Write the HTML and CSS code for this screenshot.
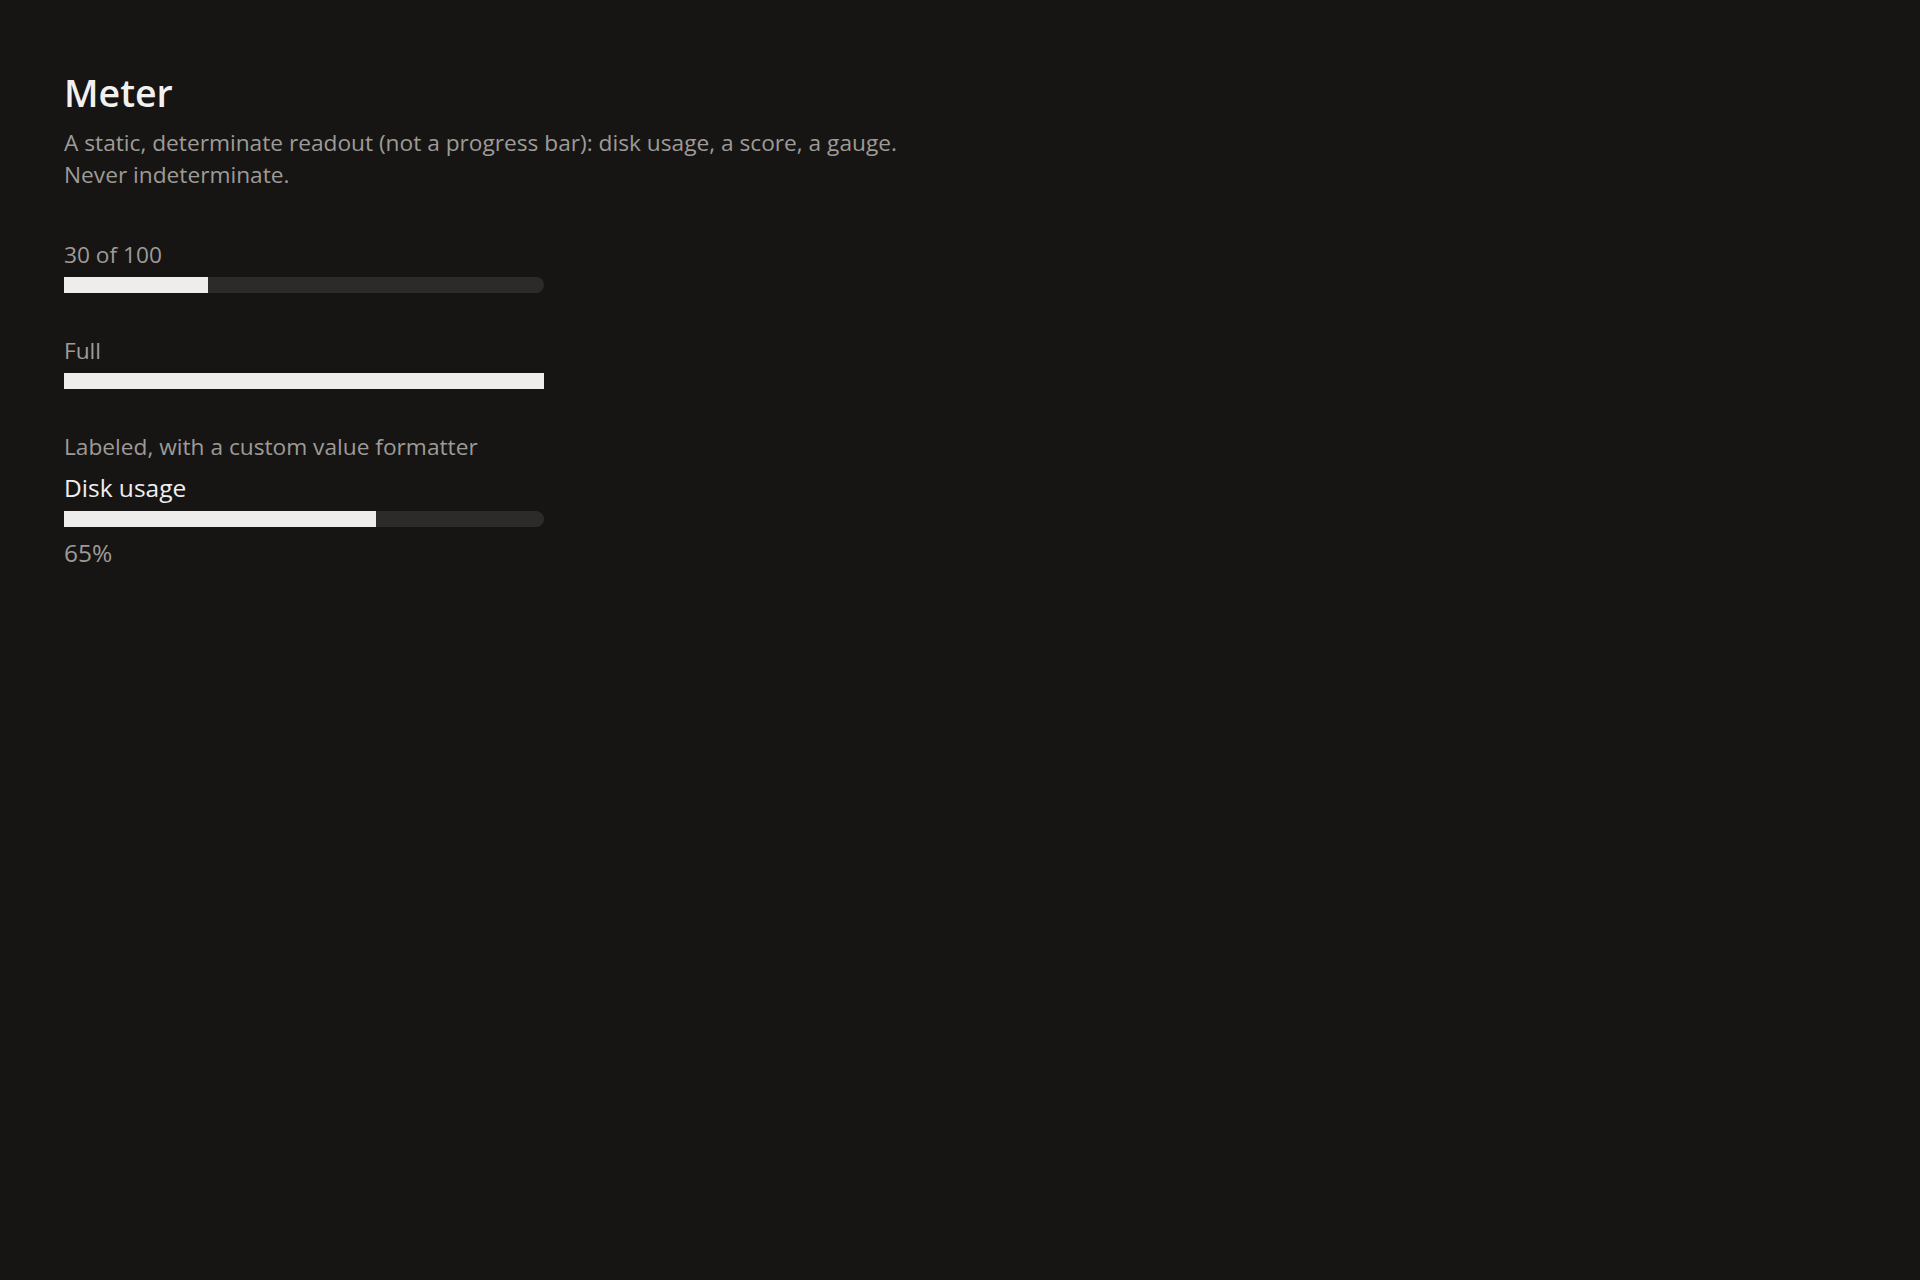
FILE: index.html
```html
<!DOCTYPE html>
<html lang="en">
<head>
  <meta charset="UTF-8">
  <meta name="viewport" content="width=device-width, initial-scale=1.0">
  <title>Meter</title>
  <link rel="stylesheet" href="styles.css">
</head>
<body>
  <main class="demo-page">
    <h1 class="demo-title">Meter</h1>
    <p class="demo-lede">A static, determinate readout (not a progress bar): disk usage, a score, a gauge. Never indeterminate.</p>

    <section class="demo-case">
      <p class="demo-caption">30 of 100</p>
      <div class="meter" role="meter" aria-valuemin="0" aria-valuemax="100" aria-valuenow="30">
        <div class="meter-track">
          <div class="meter-fill" style="width: 30%"></div>
        </div>
      </div>
    </section>

    <section class="demo-case">
      <p class="demo-caption">Full</p>
      <div class="meter" role="meter" aria-valuemin="0" aria-valuemax="100" aria-valuenow="100">
        <div class="meter-track">
          <div class="meter-fill" style="width: 100%"></div>
        </div>
      </div>
    </section>

    <section class="demo-case">
      <p class="demo-caption">Labeled, with a custom value formatter</p>
      <div class="meter meter-labeled" role="meter" aria-valuemin="0" aria-valuemax="100" aria-valuenow="65" aria-labelledby="disk-label">
        <span class="meter-label" id="disk-label">Disk usage</span>
        <div class="meter-track">
          <div class="meter-fill" style="width: 65%"></div>
        </div>
        <span class="meter-value">65%</span>
      </div>
    </section>
  </main>
</body>
</html>
```

FILE: styles.css
```css
html, body {
  margin: 0;
  padding: 0;
  background-color: #161514;
}
body {
  font-family: "Open Sans", "Noto Sans", sans-serif;
  color: #9e9b97;
  min-height: 100vh;
}
.demo-page {
  padding: 70px 64px;
  display: flex;
  flex-direction: column;
}
.demo-title {
  margin: 0;
  font-size: 37.5px;
  line-height: 46px;
  font-weight: 600;
  color: #f2f1ef;
}
.demo-lede {
  margin: 11px 0 0;
  max-width: 880px;
  font-size: 22.7px;
  line-height: 32px;
}
.demo-case {
  display: flex;
  flex-direction: column;
  gap: 7px;
  margin-top: 42px;
}
.demo-case:first-of-type {
  margin-top: 48px;
}
.demo-caption {
  margin: 0;
  font-size: 22.7px;
  line-height: 31px;
}
.meter {
  width: 480px;
  display: flex;
  flex-direction: column;
  gap: 8px;
}
.meter-labeled {
  margin-top: 3px;
}
.meter-label {
  font-size: 24.5px;
  line-height: 31px;
  color: #f0efed;
}
.meter-value {
  font-size: 24.5px;
  line-height: 31px;
  margin-top: 2px;
}
.meter-track {
  height: 16px;
  border-radius: 8px;
  background-color: #2c2b29;
}
.meter-fill {
  height: 100%;
  background-color: #eeedeb;
}
```
